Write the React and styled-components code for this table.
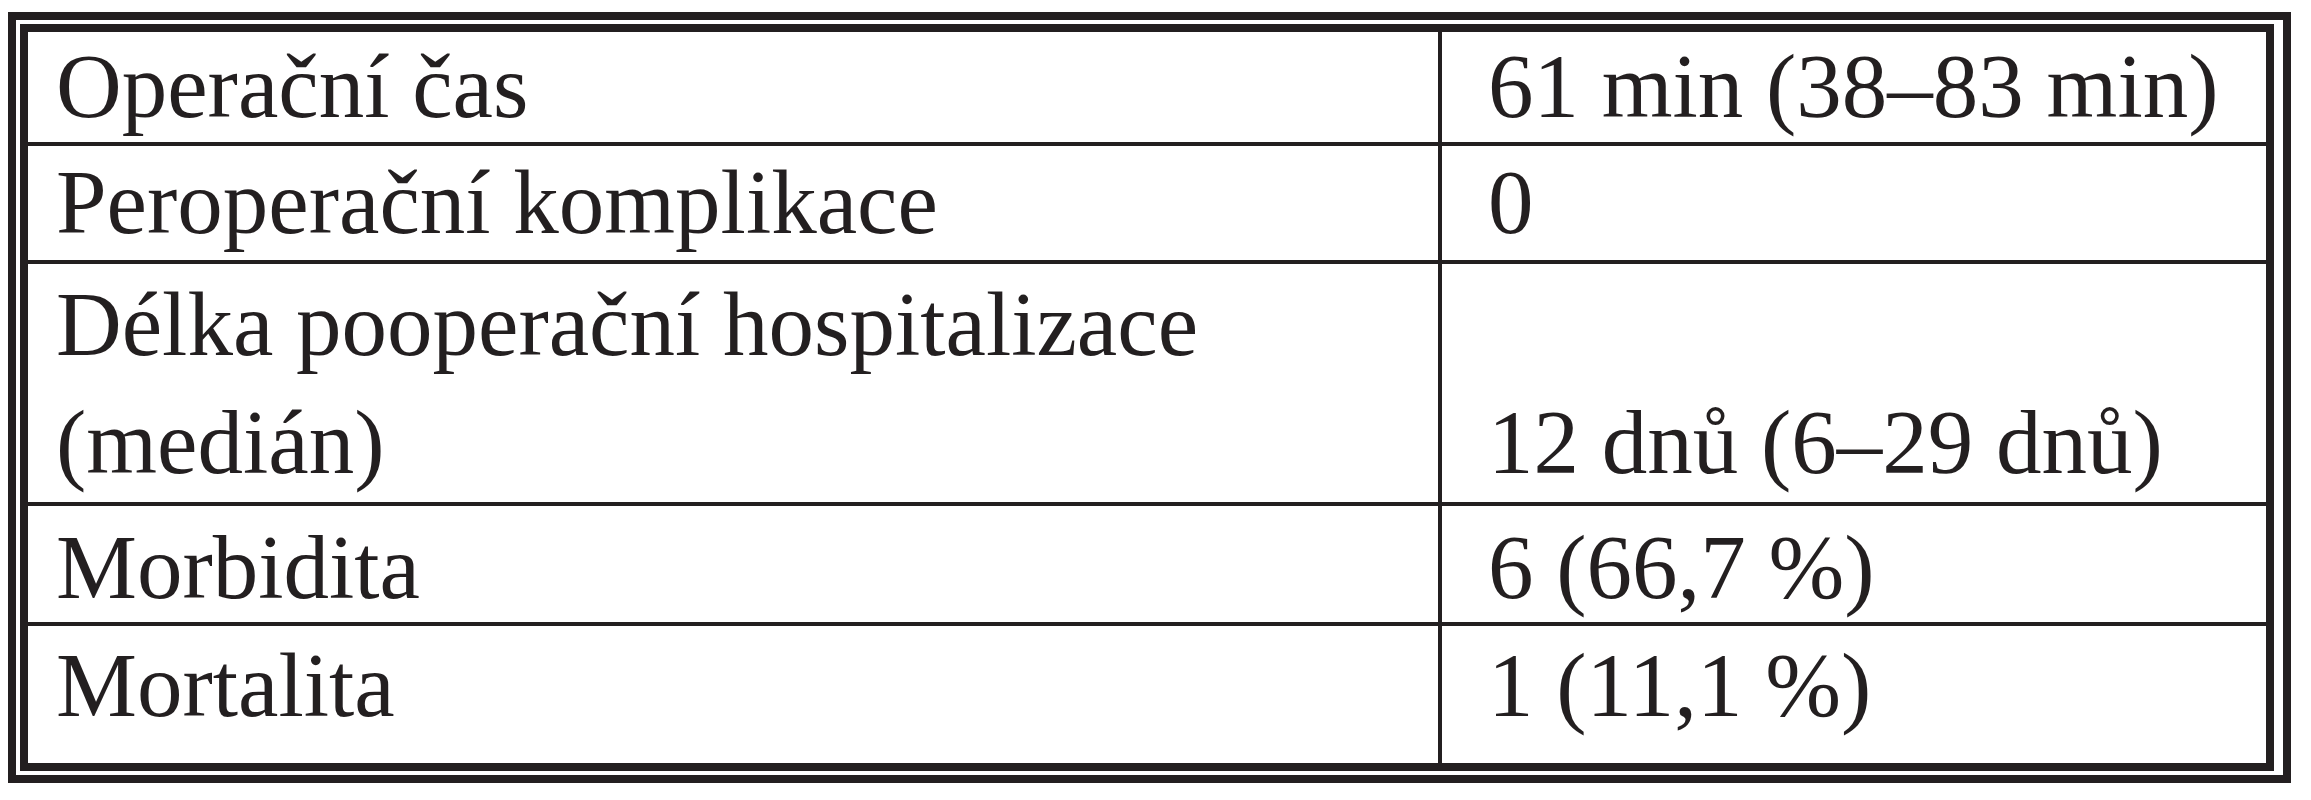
import React from 'react';
import styled, { createGlobalStyle } from 'styled-components';

const GlobalStyle = createGlobalStyle`
  html, body {
    margin: 0;
    padding: 0;
    background: #ffffff;
  }
  body {
    font-family: "Liberation Serif", "Times New Roman", serif;
    color: #231f20;
  }
`;

const Page = styled.div`
  padding: 12px 0 0 8px;
`;

const Frame = styled.div`
  display: inline-block;
  border: 8px solid #231f20;
  padding: 4px 9px 4px 4px;
`;

const Table = styled.table`
  width: 2254px;
  table-layout: fixed;
  border-collapse: separate;
  border-spacing: 0;
  border: 8px solid #231f20;
`;

const Row = styled.tr`
  &:not(:last-child) td {
    border-bottom: 4px solid #231f20;
  }
`;

const Cell = styled.td`
  box-sizing: border-box;
  width: ${(props) => (props.$label ? '1414px' : 'auto')};
  padding: ${(props) => props.$pt}px 0 ${(props) => props.$pb}px ${(props) => (props.$label ? 28 : 46)}px;
  border-right: ${(props) => (props.$label ? '4px solid #231f20' : 'none')};
  font-size: 91px;
  line-height: ${(props) => props.$lh}px;
  vertical-align: bottom;
  white-space: nowrap;
  font-weight: 400;
`;

const rows = [
  { label: ['Operační čas'], value: '61 min (38–83 min)', pt: 0, lh: 110, pb: 0 },
  { label: ['Peroperační komplikace'], value: '0', pt: 0, lh: 114, pb: 0 },
  { label: ['Délka pooperační hospitalizace', '(medián)'], value: '12 dnů (6–29 dnů)', pt: 2, lh: 118, pb: 0 },
  { label: ['Morbidita'], value: '6 (66,7 %)', pt: 7, lh: 109, pb: 0 },
  { label: ['Mortalita'], value: '1 (11,1 %)', pt: 5, lh: 110, pb: 22 },
];

function App() {
  return (
    <Page>
      <GlobalStyle />
      <Frame>
        <Table>
          <tbody>
            {rows.map((row) => (
              <Row key={row.value}>
                <Cell $label $pt={row.pt} $lh={row.lh} $pb={row.pb}>
                  {row.label.map((line, i) => (
                    <React.Fragment key={line}>
                      {i > 0 && <br />}
                      {line}
                    </React.Fragment>
                  ))}
                </Cell>
                <Cell $pt={row.pt} $lh={row.lh} $pb={row.pb}>
                  {row.value}
                </Cell>
              </Row>
            ))}
          </tbody>
        </Table>
      </Frame>
    </Page>
  );
}

export default App;
